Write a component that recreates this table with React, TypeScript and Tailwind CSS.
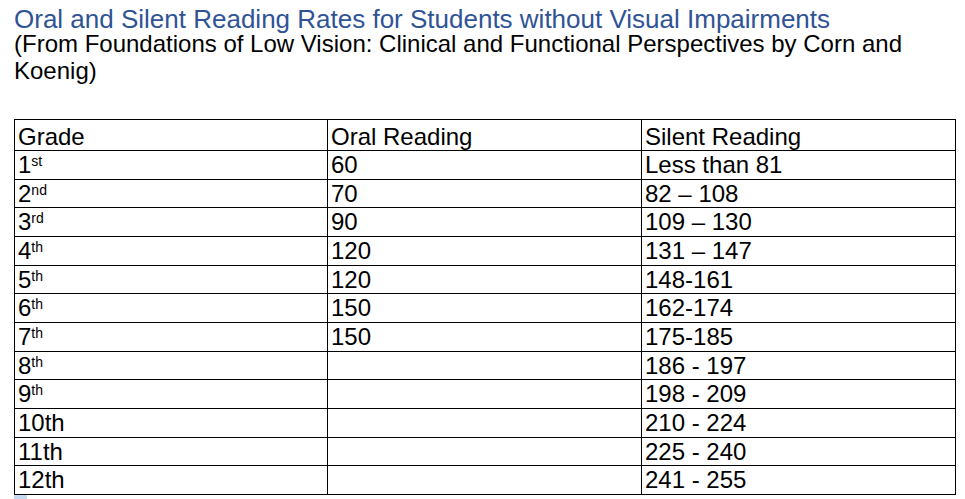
const rows: { g: string; sup?: string; oral: string; silent: string }[] = [
  { g: "1", sup: "st", oral: "60", silent: "Less than 81" },
  { g: "2", sup: "nd", oral: "70", silent: "82 – 108" },
  { g: "3", sup: "rd", oral: "90", silent: "109 – 130" },
  { g: "4", sup: "th", oral: "120", silent: "131 – 147" },
  { g: "5", sup: "th", oral: "120", silent: "148-161" },
  { g: "6", sup: "th", oral: "150", silent: "162-174" },
  { g: "7", sup: "th", oral: "150", silent: "175-185" },
  { g: "8", sup: "th", oral: "", silent: "186 - 197" },
  { g: "9", sup: "th", oral: "", silent: "198 - 209" },
  { g: "10th", oral: "", silent: "210 - 224" },
  { g: "11th", oral: "", silent: "225 - 240" },
  { g: "12th", oral: "", silent: "241 - 255" },
];

export default function App() {
  return (
    <div
      className="h-[499px] w-[965px] overflow-hidden bg-white pl-[14px] pt-[9px] text-black"
      style={{ fontFamily: '"Liberation Sans", Arial, sans-serif' }}
    >
      <h1 className="text-[26px] leading-[21px] text-[#2f5496]">
        Oral and Silent Reading Rates for Students without Visual Impairments
      </h1>
      <p className="w-[910px] text-[24px] leading-[27px]">
        (From Foundations of Low Vision: Clinical and Functional Perspectives by Corn and
        Koenig)
      </p>

      <table className="mt-[35px] w-[941px] table-fixed border-collapse text-[24px] leading-[27px]">
        <colgroup>
          <col className="w-[313px]" />
          <col className="w-[314px]" />
          <col className="w-[314px]" />
        </colgroup>
        <thead>
          <tr className="h-[30px]">
            <th className="border border-black px-[3px] pt-[3px] text-left align-top font-normal">Grade</th>
            <th className="border border-black px-[3px] pt-[3px] text-left align-top font-normal">Oral Reading</th>
            <th className="border border-black px-[3px] pt-[3px] text-left align-top font-normal">Silent Reading</th>
          </tr>
        </thead>
        <tbody>
          {rows.map((r) => (
            <tr key={r.g} className="h-[28.67px]">
              <td className="border border-black px-[3px] align-top">
                {r.g}
                {r.sup && <sup className="text-[14px] leading-none">{r.sup}</sup>}
              </td>
              <td className="border border-black px-[3px] align-top">{r.oral}</td>
              <td className="border border-black px-[3px] align-top">{r.silent}</td>
            </tr>
          ))}
        </tbody>
      </table>
      <div className="h-[5px] w-[13px] bg-[#c6d9f1]" />
    </div>
  );
}
